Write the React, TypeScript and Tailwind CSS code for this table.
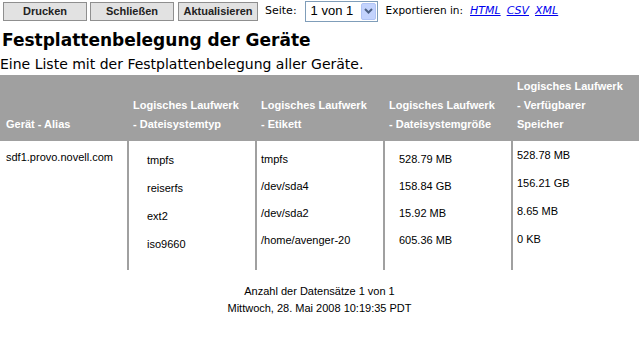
import React from "react";

const tahoma = "font-['Tahoma','DejaVu_Sans',sans-serif]";
const arial = "font-['Liberation_Sans',Arial,sans-serif]";
const small = `${arial} text-[11px]`;

const rows = [
  { type: "tmpfs", label: "tmpfs", size: "528.79 MB", free: "528.78 MB" },
  { type: "reiserfs", label: "/dev/sda4", size: "158.84 GB", free: "156.21 GB" },
  { type: "ext2", label: "/dev/sda2", size: "15.92 MB", free: "8.65 MB" },
  { type: "iso9660", label: "/home/avenger-20", size: "605.36 MB", free: "0 KB" },
];

function Button({ children, width }: { children: React.ReactNode; width: string }) {
  return (
    <button
      className={`h-[19px] ${width} border border-[#8f8f8f] bg-[#e2e2e2] text-[11px] font-bold leading-none text-[#222] whitespace-nowrap ${arial}`}
    >
      {children}
    </button>
  );
}

export default function App() {
  return (
    <div className="w-[639px] h-[343px] bg-white text-black overflow-hidden">
      {/* Toolbar */}
      <div className={`flex items-center h-[22px] pl-[3px] ${tahoma}`}>
        <Button width="w-[84px]">Drucken</Button>
        <div className="w-[3px]" />
        <Button width="w-[84px]">Schließen</Button>
        <div className="w-[4px]" />
        <Button width="w-[80px]">Aktualisieren</Button>
        <span className="ml-[7px] text-[11px]">Seite:</span>
        <div className="ml-[8px] flex items-center h-[21px] w-[73px] border border-[#7f9db9] bg-white">
          <span className={`flex-1 pl-[5px] text-[13px] ${arial}`}>1 von 1</span>
          <span className="mr-[1px] flex h-[17px] w-[15px] items-center justify-center rounded-[2px] bg-[#c3d3fd] border border-[#b1c4f5]">
            <svg width="9" height="6" viewBox="0 0 9 6">
              <path d="M1 1 L4.5 4.5 L8 1" stroke="#4d6185" strokeWidth="2" fill="none" />
            </svg>
          </span>
        </div>
        <span className="ml-[8px] text-[10.5px]">Exportieren in:</span>
        <a className="ml-[7px] text-[11px] italic text-[#0000ee] underline">HTML</a>
        <a className="ml-[6px] text-[11px] italic text-[#0000ee] underline">CSV</a>
        <a className="ml-[6px] text-[11px] italic text-[#0000ee] underline">XML</a>
      </div>

      {/* Title */}
      <h1 className={`mt-[5px] pl-[2px] text-[17px] font-bold leading-[26px] ${tahoma}`}>
        Festplattenbelegung der Geräte
      </h1>
      <p className={`text-[14px] leading-[22px] ${tahoma}`}>
        Eine Liste mit der Festplattenbelegung aller Geräte.
      </p>

      {/* Header band */}
      <div
        className={`grid grid-cols-[127px_128px_128px_128px_1fr] h-[66px] bg-[#a0a0a0] text-white font-bold text-[11px] leading-[19px] whitespace-nowrap ${arial}`}
      >
        <div className="flex flex-col justify-end pl-[6px] pb-[7px]">Gerät - Alias</div>
        <div className="flex flex-col justify-end pl-[6px] pb-[7px]">
          <span>Logisches Laufwerk</span>
          <span>- Dateisystemtyp</span>
        </div>
        <div className="flex flex-col justify-end pl-[6px] pb-[7px]">
          <span>Logisches Laufwerk</span>
          <span>- Etikett</span>
        </div>
        <div className="flex flex-col justify-end pl-[6px] pb-[7px]">
          <span>Logisches Laufwerk</span>
          <span>- Dateisystemgröße</span>
        </div>
        <div className="flex flex-col justify-end pl-[6px] pb-[7px]">
          <span>Logisches Laufwerk</span>
          <span>- Verfügbarer</span>
          <span>Speicher</span>
        </div>
      </div>

      {/* Body */}
      <div className={`grid grid-cols-[127px_128px_128px_128px_1fr] h-[129px] ${small}`}>
        <div className="pl-[6px] pt-[8px]">sdf1.provo.novell.com</div>
        <div className="border-l-2 border-[#a0a0a0] pl-[18px] pt-[11px] flex flex-col gap-[12px] leading-[16px]">
          {rows.map((r) => (
            <span key={r.type}>{r.type}</span>
          ))}
        </div>
        <div className="border-l-2 border-[#a0a0a0] pl-[4px] pt-[10px] flex flex-col gap-[11px] leading-[16px]">
          {rows.map((r) => (
            <span key={r.label}>{r.label}</span>
          ))}
        </div>
        <div className="border-l-2 border-[#a0a0a0] pl-[14px] pt-[10px] flex flex-col gap-[11px] leading-[16px]">
          {rows.map((r) => (
            <span key={r.size}>{r.size}</span>
          ))}
        </div>
        <div className="border-l-2 border-[#a0a0a0] pl-[4px] pt-[6px] flex flex-col gap-[12px] leading-[16px]">
          {rows.map((r) => (
            <span key={r.free}>{r.free}</span>
          ))}
        </div>
      </div>

      {/* Footer */}
      <div className={`mt-[13px] flex flex-col items-center leading-[17px] ${small}`}>
        <span>Anzahl der Datensätze 1 von 1</span>
        <span>Mittwoch, 28. Mai 2008 10:19:35 PDT</span>
      </div>
    </div>
  );
}
